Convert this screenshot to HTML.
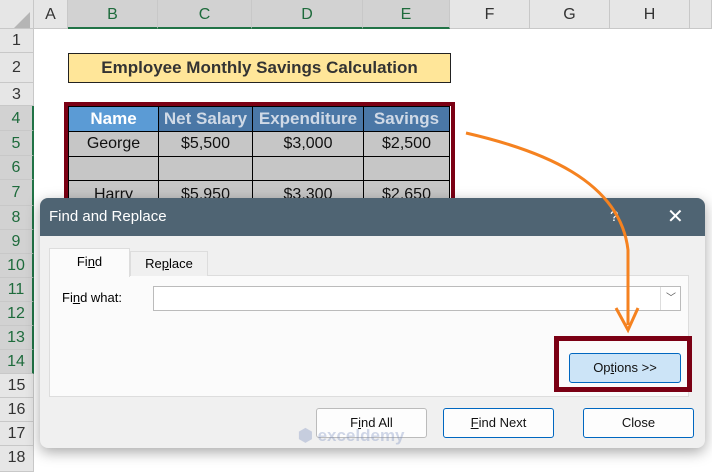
<!DOCTYPE html>
<html><head><style>
body{margin:0;width:712px;height:472px;overflow:hidden;background:#fff;font-family:"Liberation Sans",sans-serif;position:relative}
.a{position:absolute;box-sizing:border-box}
.ch{top:0;height:29px;background:#e6e6e6;border-right:1px solid #c8c8c8;border-bottom:1px solid #c8c8c8;text-align:center;line-height:29px;font-size:16px;color:#333}
.chs{background:#d2d2d2;color:#1e6b3c;border-bottom:2px solid #217346}
.rh{left:0;width:34px;background:#e6e6e6;border-bottom:1px solid #c8c8c8;border-right:1px solid #c8c8c8;text-align:center;font-size:16px;color:#333}
.rhs{background:#d2d2d2;color:#1e6b3c;border-right:2px solid #217346}
.c{border:1px solid #000;text-align:center;font-size:16px;background:#c6c6c6;color:#111}
.h{background:#4a77a6;color:#cfd9e6;font-weight:bold;font-size:17px}
.btn{height:30px;border:1px solid #bbb;background:#fdfdfd;border-radius:3px;text-align:center;line-height:28px;font-size:13px;color:#111}
</style></head><body>
<div class="a ch" style="left:0;width:34px"></div>
<div class="a ch" style="left:34px;width:34px">A</div>
<div class="a ch chs" style="left:68px;width:90px">B</div>
<div class="a ch chs" style="left:158px;width:94px">C</div>
<div class="a ch chs" style="left:252px;width:111px">D</div>
<div class="a ch chs" style="left:363px;width:87px">E</div>
<div class="a ch" style="left:450px;width:80px">F</div>
<div class="a ch" style="left:530px;width:80px">G</div>
<div class="a ch" style="left:610px;width:80px">H</div>
<div class="a ch" style="left:690px;width:22px"></div>
<svg class="a" style="left:14px;top:12px" width="16" height="16"><path d="M16 0V16H0Z" fill="#b5b5b5"/></svg>

<div class="a rh" style="top:29px;height:24px;line-height:24px">1</div>
<div class="a rh" style="top:53px;height:30px;line-height:30px">2</div>
<div class="a rh" style="top:83px;height:23px;line-height:23px">3</div>
<div class="a rh rhs" style="top:106px;height:25px;line-height:25px">4</div>
<div class="a rh rhs" style="top:131px;height:25px;line-height:25px">5</div>
<div class="a rh rhs" style="top:156px;height:24px;line-height:24px">6</div>
<div class="a rh rhs" style="top:180px;height:26px;line-height:26px">7</div>
<div class="a rh rhs" style="top:206px;height:24px;line-height:24px">8</div>
<div class="a rh rhs" style="top:230px;height:24px;line-height:24px">9</div>
<div class="a rh rhs" style="top:254px;height:24px;line-height:24px">10</div>
<div class="a rh rhs" style="top:278px;height:24px;line-height:24px">11</div>
<div class="a rh rhs" style="top:302px;height:24px;line-height:24px">12</div>
<div class="a rh rhs" style="top:326px;height:24px;line-height:24px">13</div>
<div class="a rh rhs" style="top:350px;height:24px;line-height:24px">14</div>
<div class="a rh" style="top:374px;height:24px;line-height:24px">15</div>
<div class="a rh" style="top:398px;height:24px;line-height:24px">16</div>
<div class="a rh" style="top:422px;height:24px;line-height:24px">17</div>
<div class="a rh" style="top:446px;height:26px;line-height:24px">18</div>

<div class="a" style="left:68px;top:53px;width:383px;height:30px;background:#ffe699;border:1px solid #222;text-align:center;line-height:28px;font-weight:bold;font-size:17px;color:#333">Employee Monthly Savings Calculation</div>

<div class="a c h" style="left:68px;top:106px;width:91px;height:26px;line-height:24px;background:#5b9bd5;color:#fff">Name</div>
<div class="a c h" style="left:158px;top:106px;width:95px;height:26px;line-height:24px">Net Salary</div>
<div class="a c h" style="left:252px;top:106px;width:112px;height:26px;line-height:24px">Expenditure</div>
<div class="a c h" style="left:363px;top:106px;width:87px;height:26px;line-height:24px">Savings</div>
<div class="a c" style="left:68px;top:131px;width:91px;height:26px;line-height:24px">George</div>
<div class="a c" style="left:158px;top:131px;width:95px;height:26px;line-height:24px">$5,500</div>
<div class="a c" style="left:252px;top:131px;width:112px;height:26px;line-height:24px">$3,000</div>
<div class="a c" style="left:363px;top:131px;width:87px;height:26px;line-height:24px">$2,500</div>
<div class="a c" style="left:68px;top:156px;width:91px;height:25px"></div>
<div class="a c" style="left:158px;top:156px;width:95px;height:25px"></div>
<div class="a c" style="left:252px;top:156px;width:112px;height:25px"></div>
<div class="a c" style="left:363px;top:156px;width:87px;height:25px"></div>
<div class="a c" style="left:68px;top:180px;width:91px;height:30px;line-height:28px">Harry</div>
<div class="a c" style="left:158px;top:180px;width:95px;height:30px;line-height:28px">$5,950</div>
<div class="a c" style="left:252px;top:180px;width:112px;height:30px;line-height:28px">$3,300</div>
<div class="a c" style="left:363px;top:180px;width:87px;height:30px;line-height:28px">$2,650</div>
<div class="a" style="left:64px;top:102px;width:391px;height:110px;border:4px solid #7b0014;border-bottom:none"></div>

<div class="a" style="left:40px;top:198px;width:665px;height:250px;background:#f0f0f0;border-radius:8px;box-shadow:0 4px 14px rgba(0,0,0,.35);overflow:hidden">
 <div class="a" style="left:0;top:0;width:665px;height:38px;background:#4f6473;color:#fff;font-size:15px;line-height:38px;padding-left:9px">Find and Replace</div>
 <div class="a" style="left:570px;top:0;color:#fff;font-size:15px;line-height:38px">?</div>
 <div class="a" style="left:627px;top:0;color:#fff;font-size:20px;line-height:38px">✕</div>
 <div class="a" style="left:9px;top:77px;width:640px;height:122px;background:#fbfbfb;border:1px solid #ddd"></div>
 <div class="a" style="left:9px;top:50px;width:81px;height:29px;background:#fbfbfb;border:1px solid #ddd;border-bottom:none;text-align:center;line-height:26px;font-size:13px">Fi<u>n</u>d</div>
 <div class="a" style="left:90px;top:53px;width:78px;height:25px;background:#f0f0f0;border:1px solid #ddd;border-bottom:none;text-align:center;line-height:24px;font-size:13px">Re<u>p</u>lace</div>
 <div class="a" style="left:22px;top:90px;font-size:13px;line-height:20px">Fi<u>n</u>d what:</div>
 <div class="a" style="left:113px;top:88px;width:528px;height:25px;background:#fff;border:1px solid #bbb"></div>
 <div class="a" style="left:620px;top:89px;width:21px;height:23px;border-left:1px solid #ddd;text-align:center;font-size:10px;line-height:23px;color:#555">﹀</div>
 <div class="a" style="left:514px;top:138px;width:138px;height:56px;border:5px solid #7b0014"></div>
 <div class="a btn" style="left:529px;top:155px;width:112px;border-color:#0067c0;background:#cce4f7">Op<u>t</u>ions &gt;&gt;</div>
 <div class="a btn" style="left:276px;top:210px;width:111px">F<u>i</u>nd All</div>
 <div class="a btn" style="left:403px;top:210px;width:111px;border-color:#0067c0"><u>F</u>ind Next</div>
 <div class="a btn" style="left:543px;top:210px;width:111px;border-color:#0067c0">Close</div>
 <div class="a" style="left:258px;top:228px;font-size:17px;font-weight:bold;color:rgba(120,140,190,.35)">⬢ exceldemy</div>
</div>
<svg class="a" style="left:0;top:0" width="712" height="472"><path d="M466 133 C540 150 620 180 628 250 L628 325" fill="none" stroke="#f58220" stroke-width="3"/><path d="M616 308 L628 330 L638 308" fill="none" stroke="#f58220" stroke-width="3"/></svg>
</body></html>
